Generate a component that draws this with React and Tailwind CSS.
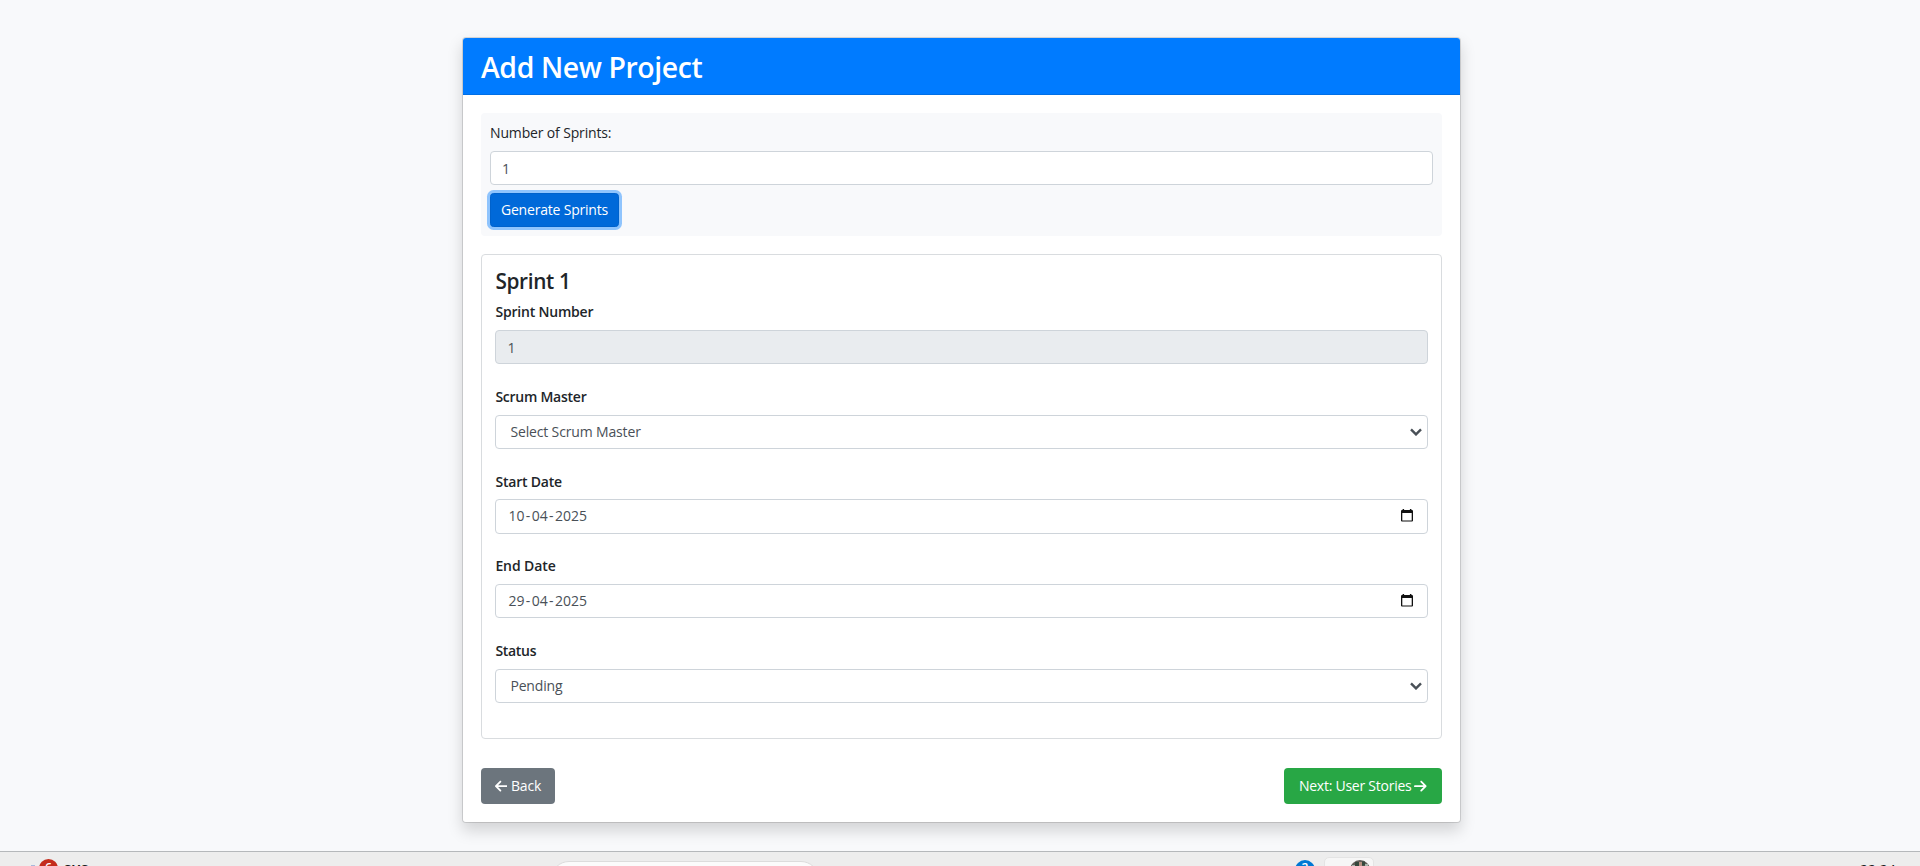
import { FaArrowLeft, FaArrowRight } from "react-icons/fa6";

function Chevron() {
  return (
    <svg className="h-2 w-3" viewBox="0 0 12 8" fill="none" stroke="#495057" strokeWidth="2.4">
      <path d="M1 1.400 6 6.400 11 1.400" />
    </svg>
  );
}

function Calendar() {
  return (
    <svg className="mb-0.5 h-[13px] w-3" viewBox="0 0 12 13">
      <path
        fill="#111"
        fillRule="evenodd"
        d="M1.6 0h1.5v1.1h5.8V0h1.5v1.1h.3c.7 0 1.3.5 1.3 1.2v9.1c0 .7-.6 1.2-1.3 1.2H1.3C.6 12.600 0 12.100 0 11.400V2.300c0-.7.600-1.200 1.300-1.200h.3zM1.300 4v7.400h9.400V4z"
      />
    </svg>
  );
}

function Field({ label, labelClass, boxClass, children }) {
  return (
    <div className="mb-[21.6px]">
      <div className={`mb-[7.2px] h-[21.6px] text-[14px] leading-[21.6px] font-semibold ${labelClass}`}>{label}</div>
      <div
        className={`flex h-[34.2px] items-center justify-between rounded-[4px] border border-[#ced4da] text-[14px] text-[#495057] ${boxClass}`}
      >
        {children}
      </div>
    </div>
  );
}

function DateValue({ parts }) {
  return (
    <span className="pb-px">
      {parts[0]}
      <span className="px-[1.4px]">-</span>
      {parts[1]}
      <span className="px-[1.4px]">-</span>
      {parts[2]}
    </span>
  );
}

function Taskbar() {
  return (
    <footer className="relative h-[15px] shrink-0 overflow-hidden border-t border-[#b5b8bb] bg-[#ededed]">
      <span className="absolute top-[13px] left-[31px] h-3 w-1 bg-[#a9b8dc]" />
      <span className="absolute top-[7px] left-[39px] flex h-[19px] w-[19px] justify-center rounded-full bg-[#c42b1c] pt-[2px] text-[12px] leading-[14px] font-semibold text-white">
        6
      </span>
      <span className="absolute top-[7px] left-[64px] text-[13px] leading-5 font-bold text-[#1b1b1b]">SUS</span>
      <span className="absolute top-[9px] left-[551px] h-9 w-[268px] rounded-full border border-[#dcdcdc] bg-[#fbfbfb]" />
      <span className="absolute top-[8px] left-[1295px] flex h-5 w-5 justify-center rounded-full bg-[#0078d4] pt-[1px] text-[12px] leading-[14px] font-semibold text-white">
        2
      </span>
      <span className="absolute top-[5px] left-[1324px] h-10 w-[50px] rounded-[5px] border border-[#e4e4e4] bg-[#f6f6f6]" />
      <svg className="absolute top-[8px] left-[1350px] h-5 w-5" viewBox="0 0 20 20">
        <circle cx="10" cy="10" r="10" fill="#625c58" />
        <path d="M5 2h4v4H5zM12 1.500h3v4h-3z" fill="#35483c" />
        <path d="M9 2h3v4H9z" fill="#b58f80" />
        <path d="M15 4h3v3h-3zM2 5h3v2H2z" fill="#a9b6ae" />
      </svg>
      <span className="absolute top-[8px] left-[1860px] text-[14px] leading-5 text-[#1b1b1b]">22:24</span>
    </footer>
  );
}

export default function App() {
  return (
    <div className="flex h-[866px] flex-col overflow-hidden bg-[#f8f9fb] font-['Open_Sans',sans-serif] text-[#212529]">
      <main className="flex flex-1 flex-col items-center pt-[37px] pl-[3px]">
        <section className="h-[786px] w-[999px] rounded-[4px] border border-black/12.5 bg-white bg-clip-padding shadow-[0_7.2px_14.4px_rgba(0,0,0,0.15)]">
          <h1 className="flex h-[57px] items-center rounded-t-[3px] border-b border-[#006fe6] bg-[#007bff] px-[18px] pt-[3px] text-[28.4px] font-semibold tracking-[-0.4px] text-white">
            Add New Project
          </h1>
          <div className="p-[18px]">
            <div className="mb-[18px] h-[123px] rounded-[4px] bg-[#f8f9fb] p-[9px] text-[14px]">
              <div className="mb-[7px] h-[22px] leading-[22px] tracking-[-0.15px]">Number of Sprints:</div>
              <div className="mb-[8px] flex h-[34px] items-center rounded-[4px] border border-[#ced4da] bg-white px-[11px] text-[#495057]">
                1
              </div>
              <button className="flex h-[34px] w-[129px] items-center justify-center rounded-[3.6px] border border-[#0062cc] bg-[#0069d9] pb-px tracking-[-0.2px] text-white shadow-[0_0_0_3px_rgba(38,143,255,0.5)]">
                Generate Sprints
              </button>
            </div>
            <div className="mb-[29.2px] rounded-[4px] border border-[#d9dcdf] p-[13.4px]">
              <h2 className="mb-[7.2px] h-[25.9px] pt-px text-[20.8px] leading-[25.9px] font-semibold tracking-[-0.35px]">
                Sprint 1
              </h2>
              <Field label="Sprint Number" labelClass="tracking-[-0.2px]" boxClass="bg-[#e9ecef] px-[11px]">
                1
              </Field>
              <Field label="Scrum Master" labelClass="tracking-[-0.25px]" boxClass="pr-[5px] pl-[14px] tracking-[-0.15px]">
                Select Scrum Master
                <Chevron />
              </Field>
              <Field label="Start Date" labelClass="tracking-[-0.2px]" boxClass="pr-[14px] pl-[12px]">
                <DateValue parts={["10", "04", "2025"]} />
                <Calendar />
              </Field>
              <Field label="End Date" labelClass="tracking-[-0.1px]" boxClass="pr-[14px] pl-[12px]">
                <DateValue parts={["29", "04", "2025"]} />
                <Calendar />
              </Field>
              <Field label="Status" labelClass="tracking-[-0.3px]" boxClass="pr-[5px] pl-[14px] tracking-[-0.15px]">
                Pending
                <Chevron />
              </Field>
            </div>
            <div className="flex justify-between text-[14px] text-white">
              <button className="flex h-9 w-[74px] items-center justify-center gap-[3.6px] rounded-[4px] bg-[#6c757d] tracking-[-0.15px]">
                <FaArrowLeft className="h-[14.4px] w-[12.6px]" />
                Back
              </button>
              <button className="flex h-9 w-[158px] items-center justify-center gap-[3px] rounded-[4px] bg-[#28a745] tracking-[-0.25px]">
                Next: User Stories
                <FaArrowRight className="h-[14.4px] w-[12.6px]" />
              </button>
            </div>
          </div>
        </section>
      </main>
      <Taskbar />
    </div>
  );
}
